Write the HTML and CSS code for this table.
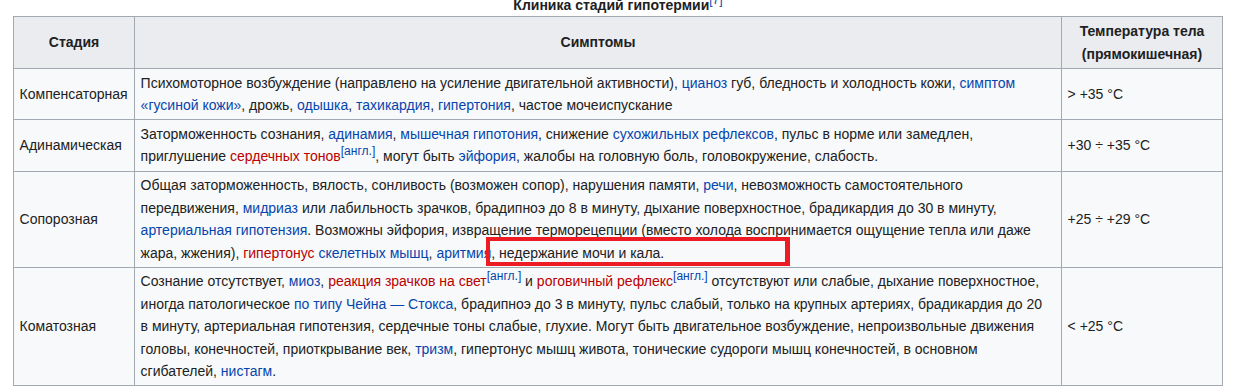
FILE: index.html
```html
<!DOCTYPE html>
<html lang="ru">
<head>
<meta charset="utf-8">
<title>Клиника стадий гипотермии</title>
<link rel="stylesheet" href="styles.css">
</head>
<body>
<div class="page">
  <div class="table-wrap">
    <table class="wikitable">
      <caption>Клиника стадий гипотермии<sup class="ref"><a href="#">[7]</a></sup></caption>
      <colgroup>
        <col class="c-stage">
        <col class="c-symptoms">
        <col class="c-temp">
      </colgroup>
      <thead>
        <tr>
          <th>Стадия</th>
          <th>Симптомы</th>
          <th>Температура тела<br>(прямокишечная)</th>
        </tr>
      </thead>
      <tbody>
        <tr>
          <td>Компенсаторная</td>
          <td class="symptoms">Психомоторное возбуждение (направлено на усиление двигательной активности), <a href="#">цианоз</a> губ, бледность и холодность кожи, <a href="#">симптом «гусиной кожи»</a>, дрожь, <a href="#">одышка</a>, <a href="#">тахикардия</a>, <a href="#">гипертония</a>, частое мочеиспускание</td>
          <td>&gt; +35 °C</td>
        </tr>
        <tr>
          <td>Адинамическая</td>
          <td class="symptoms">Заторможенность сознания, <a href="#">адинамия</a>, <a href="#">мышечная гипотония</a>, снижение <a href="#">сухожильных рефлексов</a>, пульс в норме или замедлен, приглушение <a class="new" href="#">сердечных тонов</a><sup class="ref"><a href="#">[англ.]</a></sup>, могут быть <a href="#">эйфория</a>, жалобы на головную боль, головокружение, слабость.</td>
          <td>+30 ÷ +35 °C</td>
        </tr>
        <tr>
          <td>Сопорозная</td>
          <td class="symptoms">Общая заторможенность, вялость, сонливость (возможен сопор), нарушения памяти, <a href="#">речи</a>, невозможность самостоятельного передвижения, <a href="#">мидриаз</a> или лабильность зрачков, брадипноэ до 8 в минуту, дыхание поверхностное, брадикардия до 30 в минуту, <a href="#">артериальная гипотензия</a>. Возможны эйфория, извращение терморецепции (вместо холода воспринимается ощущение тепла или даже жара, жжения), <a class="new" href="#">гипертонус</a> <a href="#">скелетных мышц</a>, <a href="#">аритмия</a><span class="marked">, недержание мочи и кала.<span class="highlight-box"></span></span></td>
          <td>+25 ÷ +29 °C</td>
        </tr>
        <tr>
          <td>Коматозная</td>
          <td class="symptoms">Сознание отсутствует, <a href="#">миоз</a>, <a class="new" href="#">реакция зрачков на свет</a><sup class="ref"><a href="#">[англ.]</a></sup> и <a class="new" href="#">роговичный рефлекс</a><sup class="ref"><a href="#">[англ.]</a></sup> отсутствуют или слабые, дыхание поверхностное, иногда патологическое <a href="#">по типу Чейна — Стокса</a>, брадипноэ до 3 в минуту, пульс слабый, только на крупных артериях, брадикардия до 20 в минуту, артериальная гипотензия, сердечные тоны слабые, глухие. Могут быть двигательное возбуждение, непроизвольные движения головы, конечностей, приоткрывание век, <a href="#">тризм</a>, гипертонус мышц живота, тонические судороги мышц конечностей, в основном сгибателей, <a href="#">нистагм</a>.</td>
          <td>&lt; +25 °C</td>
        </tr>
      </tbody>
    </table>
  </div>
</div>
</body>
</html>
```

FILE: styles.css
```css
html, body {
  margin: 0;
  padding: 0;
  background: #ffffff;
}

body {
  font-family: "Liberation Sans", Arial, sans-serif;
  font-size: 14px;
  line-height: 1.6;
  color: #202122;
}

.page {
  padding-left: 13px;
  margin-top: -6px;
}

.table-wrap {
  width: 1209px;
}

.wikitable {
  width: 1209px;
  table-layout: fixed;
  border-collapse: collapse;
  background: #f8f9fa;
  color: #202122;
  border: 1px solid #a2a9b1;
}

.wikitable caption {
  font-weight: bold;
  text-align: center;
  line-height: 22.4px;
}

.c-stage { width: 121px; }
.c-symptoms { width: 927px; }
.c-temp { width: 161px; }

.wikitable th,
.wikitable td {
  border: 1px solid #a2a9b1;
  padding: 2.8px 5.6px;
  vertical-align: middle;
}

.wikitable td.symptoms {
  padding-right: 12px;
}

.wikitable th {
  background: #eaecf0;
  text-align: center;
  font-weight: bold;
}

.wikitable td {
  text-align: left;
}

a {
  color: #0645ad;
  text-decoration: none;
}

a.new {
  color: #ba0000;
}

sup.ref {
  font-size: 86%;
  line-height: 1;
  vertical-align: super;
  font-weight: normal;
}

.marked {
  position: relative;
}

.highlight-box {
  position: absolute;
  left: -5px;
  top: -8px;
  width: 304px;
  height: 29px;
  box-sizing: border-box;
  border: 4px solid #ed1c24;
  border-right-width: 5px;
  pointer-events: none;
}
```
